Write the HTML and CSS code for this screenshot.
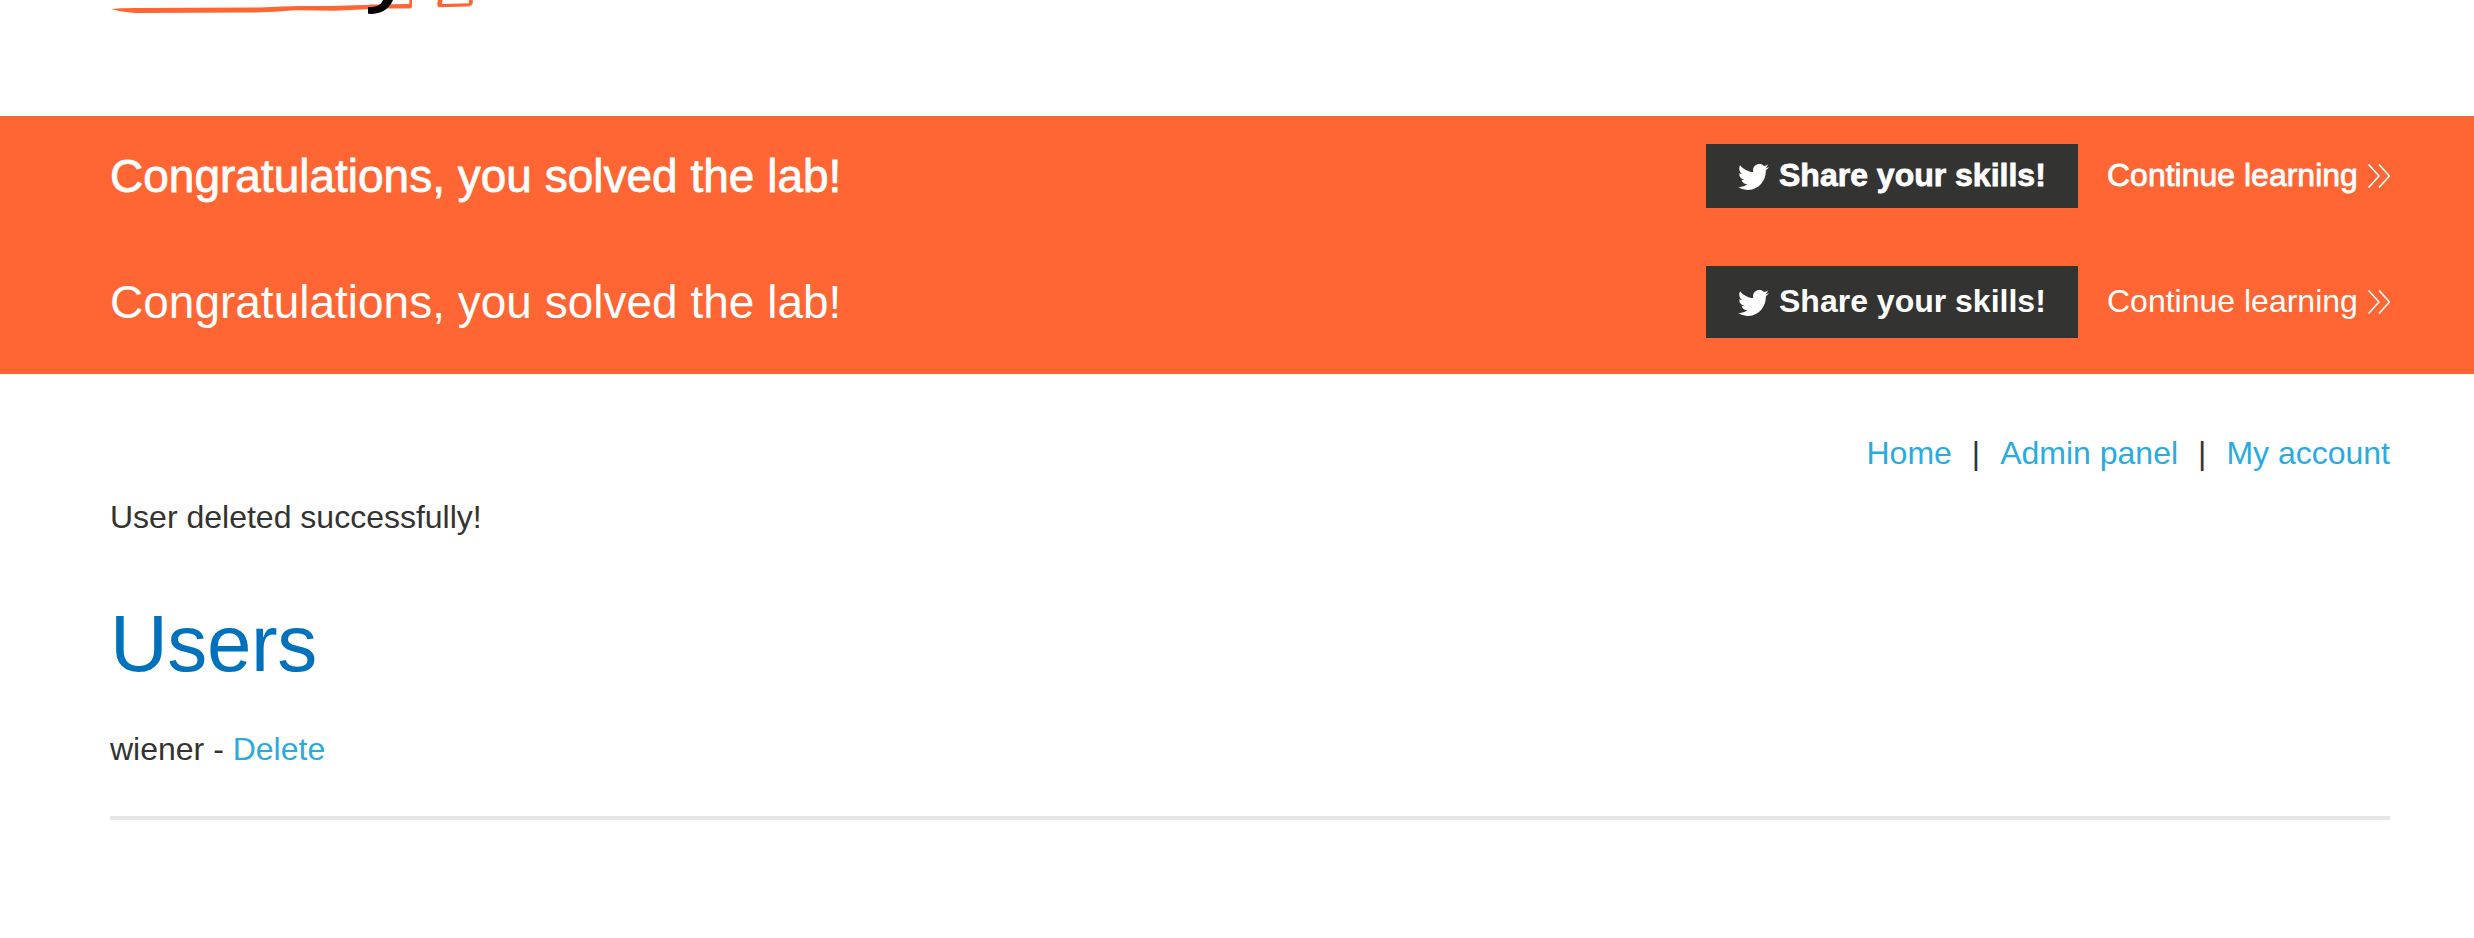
FILE: index.html
```html
<!DOCTYPE html>
<html lang="en">
<head>
<meta charset="utf-8">
<title>Lab</title>
<link rel="stylesheet" href="styles.css">
</head>
<body>
<svg width="0" height="0" class="defs">
  <symbol id="bird" viewBox="0 2.25 24 19.5" preserveAspectRatio="none">
    <path d="M23.953 4.57a10 10 0 01-2.825.775 4.958 4.958 0 002.163-2.723c-.951.555-2.005.959-3.127 1.184a4.92 4.92 0 00-8.384 4.482C7.69 8.095 4.067 6.13 1.64 3.162a4.822 4.822 0 00-.666 2.475c0 1.71.87 3.213 2.188 4.096a4.904 4.904 0 01-2.228-.616v.06a4.923 4.923 0 003.946 4.827 4.996 4.996 0 01-2.212.085 4.936 4.936 0 004.604 3.417 9.867 9.867 0 01-6.102 2.105c-.39 0-.779-.023-1.17-.067a13.995 13.995 0 007.557 2.209c9.053 0 13.998-7.496 13.998-13.985 0-.21 0-.42-.015-.63A9.935 9.935 0 0024 4.59z" fill="#fff"/>
  </symbol>
  <symbol id="chevrons" viewBox="0 0 22 24">
    <path d="M.6 .4 11 12 .6 23.6M11 .4 21.4 12 11 23.6" fill="none" stroke="#fff" stroke-width="1.5"/>
  </symbol>
</svg>
<header class="top">
  <svg class="logo" viewBox="0 0 400 116" width="400" height="116">
    <path d="M21 9Q28 8 45 7.900L170 7.500Q195 6 210 5.900L240 6 282 4.800V9L245 10.700 205 10.300Q185 12.300 165 12.600L45 12.900Q30 12 21 9Z" fill="#f63"/>
    <path d="M280 4.600 319.300 4V0H322V6.500Q322 8.500 319 8.400L280 8.600Z" fill="#f63"/>
    <path fill-rule="evenodd" d="M348 0Q346 6.500 349 7.300L378 6.600Q382 6.400 382.800 3V0H379V3.300L352 4 352.500 0Z" fill="#f63"/>
    <path d="M293 0C290 6 287 7 278 7V13.800C289 14.800 299 10 303 0Z" fill="#000"/>
  </svg>
</header>
<section class="banner">
  <div class="row row-strong">
    <h4 class="message">Congratulations, you solved the lab!</h4>
    <div class="actions">
      <a class="share"><svg class="bird"><use href="#bird"/></svg>Share your skills!</a>
      <a class="continue">Continue learning<svg class="chevrons"><use href="#chevrons"/></svg></a>
    </div>
  </div>
  <div class="row row-plain">
    <h4 class="message">Congratulations, you solved the lab!</h4>
    <div class="actions">
      <a class="share"><svg class="bird"><use href="#bird"/></svg>Share your skills!</a>
      <a class="continue">Continue learning<svg class="chevrons"><use href="#chevrons"/></svg></a>
    </div>
  </div>
</section>
<main class="content">
  <nav class="links"><a>Home</a><span class="bar">|</span><a>Admin panel</a><span class="bar">|</span><a>My account</a></nav>
  <p class="notice">User deleted successfully!</p>
  <h1 class="title">Users</h1>
  <div class="user">wiener - <a>Delete</a></div>
  <hr class="rule">
</main>
</body>
</html>
```
FILE: styles.css
```css
body {
  margin: 0;
  background: #fff;
  color: #333332;
  font: 32px/40px "Liberation Sans", Arial, sans-serif;
  overflow: hidden;
}
.defs { display: block; }
.top { height: 116px; padding-left: 90px; }
.logo { display: block; }
.banner {
  background: #ff6633;
  color: #fff;
  height: 258px;
}
.row {
  display: flex;
  justify-content: space-between;
  align-items: center;
  padding: 0 84px 0 110px;
}
.row-strong { height: 120px; }
.row-plain { height: 132px; }
.row-strong .message,
.row-strong .actions { -webkit-text-stroke: 0.8px #fff; }
.message { margin: 0; font-size: 46px; line-height: 60px; font-weight: 400; }
.actions { display: flex; align-items: center; gap: 29px; }
.share {
  display: flex;
  align-items: center;
  gap: 10px;
  box-sizing: border-box;
  width: 372px;
  height: 64px;
  padding: 0 0 2px 32px;
  background: #333332;
  font-weight: 700;
  white-space: nowrap;
}
.row-plain .share { height: 72px; }
.bird { width: 31px; height: 26px; margin-top: 4px; }
.continue {
  display: flex;
  align-items: center;
  justify-content: space-between;
  width: 283px;
  padding-bottom: 2px;
  white-space: nowrap;
}
.chevrons { width: 22px; height: 24px; margin-top: 2px; }
.content { padding: 59px 84px 0 110px; }
.links { display: flex; justify-content: flex-end; }
.bar { margin: 0 20px; }
a { color: #29abe2; }
.banner a { color: #fff; }
.notice { margin: 24px 0 57px; }
.title { margin: 0 0 35px; color: #0071bc; font-size: 80px; line-height: 100px; font-weight: 400; letter-spacing: -0.4px; }
.rule { height: 4px; margin: 47px 0 0; border: 0; background: #e6e6e6; }
```
